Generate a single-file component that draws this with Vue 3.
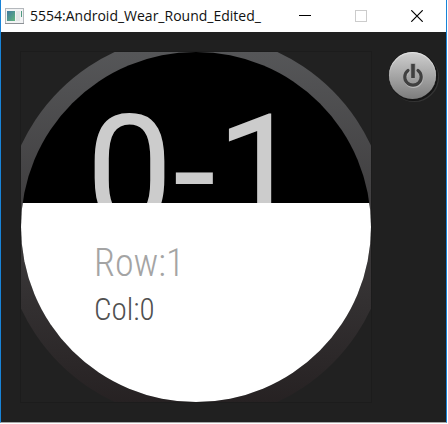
<script setup>
import { ref } from 'vue'

const title = ref('5554:Android_Wear_Round_Edited_')
const row = ref(1)
const col = ref(0)
</script>

<template>
  <div class="window">
    <header class="titlebar">
      <svg class="app-icon" viewBox="0 0 19 16" aria-hidden="true">
        <defs>
          <linearGradient id="pane" x1="0" y1="0" x2="1" y2="1">
            <stop offset="0" stop-color="#3f78a0" />
            <stop offset="1" stop-color="#62b57c" />
          </linearGradient>
        </defs>
        <rect x="0.5" y="0.5" width="18" height="15" fill="#f2f3f4" stroke="#b4b8bc" />
        <path d="M0 15.5H19" stroke="#8d9196" />
        <rect x="2" y="3" width="8" height="10" fill="url(#pane)" />
        <rect x="11" y="3" width="4" height="10" fill="#e2e5e6" />
        <rect x="16" y="3" width="1" height="6" fill="#4f9a80" />
      </svg>
      <h1 class="title">{{ title }}</h1>
      <div class="controls">
        <button class="control" type="button" aria-label="Minimize">
          <svg viewBox="0 0 12 12"><path d="M0 5.5H12" stroke="#000" /></svg>
        </button>
        <button class="control" type="button" aria-label="Maximize" disabled>
          <svg viewBox="0 0 12 12"><rect x="0.5" y="0.5" width="11" height="11" fill="none" stroke="#ccc" /></svg>
        </button>
        <button class="control" type="button" aria-label="Close">
          <svg viewBox="0 0 12 12"><path d="M0.3 0.3L11.7 11.7M11.7 0.3L0.3 11.7" stroke="#000" stroke-width="1.2" /></svg>
        </button>
      </div>
    </header>

    <main class="device">
      <section class="screen">
        <div class="bezel"></div>
        <div class="face">
          <div class="page">{{ col }}-{{ row }}</div>
          <div class="card">
            <p class="row">Row:{{ row }}</p>
            <p class="col">Col:{{ col }}</p>
          </div>
        </div>
      </section>
      <button class="power" type="button" aria-label="Power">
        <svg viewBox="0 0 24 26">
          <g fill="none" stroke-linecap="round">
            <path d="M7 7.5A8.2 8.2 0 1 0 17 7.5" stroke="#b8b8b8" stroke-width="3.4" transform="translate(0.5 1)" />
            <path d="M7 7.5A8.2 8.2 0 1 0 17 7.5" stroke="#404040" stroke-width="3.2" />
            <path d="M12 2.5V13.5" stroke="#a4a4a4" stroke-width="6" />
            <path d="M12 1V15" stroke="#404040" stroke-width="3.6" stroke-linecap="butt" />
          </g>
        </svg>
      </button>
    </main>
  </div>
</template>

<style>
body {
  margin: 0;
  background: #fff;
}
</style>

<style scoped>
.window {
  box-sizing: border-box;
  margin-right: 1px;
  border: solid #1883d7;
  border-width: 0 1px;
  border-bottom: 1px solid #a8a8a8;
  background: #202020;
}

.titlebar {
  display: flex;
  align-items: center;
  height: 32px;
  padding: 0 1px 0 4px;
  background: #fff;
}

.app-icon {
  flex: none;
  width: 19px;
  height: 16px;
}

.title {
  flex: 1;
  min-width: 0;
  margin: 0 0 0 6px;
  overflow: hidden;
  white-space: nowrap;
  font: 400 14px/24px "Open Sans", "Noto Sans", sans-serif;
  color: #111;
}

.controls {
  display: flex;
}

.control {
  display: grid;
  place-items: center;
  width: 56px;
  height: 30px;
  padding: 0;
  border: 0;
  background: none;
}

.control svg {
  width: 12px;
  height: 12px;
}

.device {
  display: flex;
  align-items: flex-start;
  gap: 18px;
  padding: 20px 10px 20px 20px;
}

.screen {
  position: relative;
  flex: 1;
  aspect-ratio: 1;
  overflow: hidden;
  background: #212121;
  outline: 1px solid #1c1c1c;
}

.bezel {
  position: absolute;
  inset: -18px;
  border-radius: 50%;
  background: linear-gradient(#58595b, #3a3839 55%, #241f20);
}

.face {
  position: relative;
  display: flex;
  flex-direction: column;
  height: 100%;
  overflow: hidden;
  border-radius: 50%;
  background: #000;
}

.page {
  box-sizing: border-box;
  height: 151px;
  padding: 28px 0 0 65px;
  overflow: hidden;
  white-space: nowrap;
  font: 400 155px/184px Roboto, sans-serif;
  color: #ccc;
}

.card {
  flex: 1;
  padding: 36px 0 0 73px;
  background: #fff;
  font-family: "Roboto Condensed", "Liberation Sans Narrow", Roboto, sans-serif;
  font-weight: 300;
}

.row,
.col {
  margin: 0;
}

.row {
  font-size: 38px;
  line-height: 48px;
  color: #a4a4a4;
}

.col {
  font-size: 31px;
  line-height: 46px;
  color: #505050;
}

.power {
  display: grid;
  flex: none;
  place-items: center;
  width: 47px;
  height: 47px;
  padding: 0;
  border: 0;
  border-radius: 50%;
  background: linear-gradient(#cfcfcf, #a6a6a6 50%, #7c7c7c);
  box-shadow: inset 0 1px 1px #e4e4e4, 1px 1px 0 1px #151515, 2px 2px 0 1px #343434;
}

.power svg {
  width: 24px;
  height: 26px;
}
</style>
